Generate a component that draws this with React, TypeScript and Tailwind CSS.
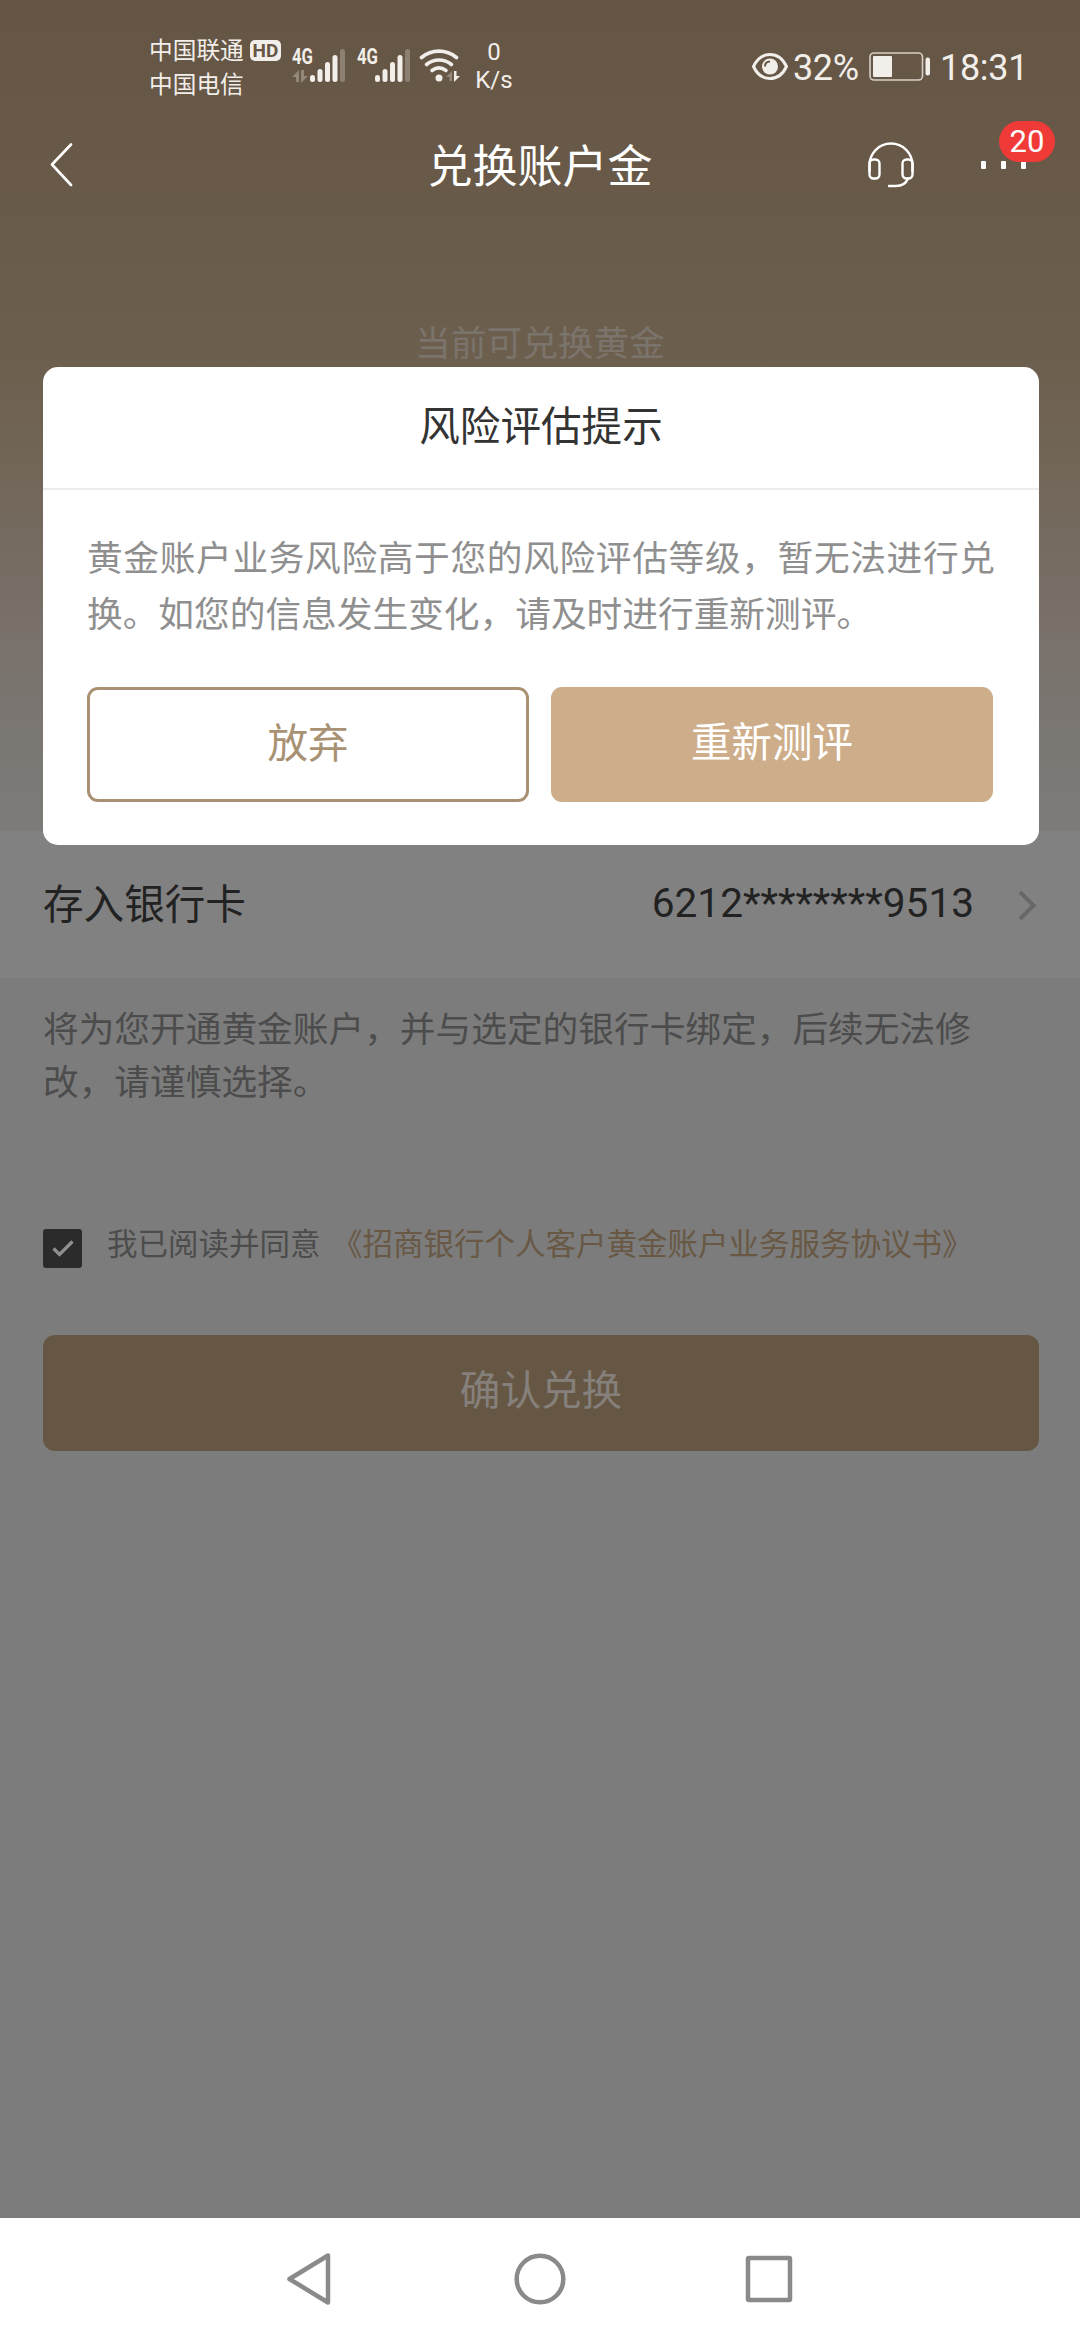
import type { ReactNode } from 'react';

const AGREEMENT = '《招商银行个人客户黄金账户业务服务协议书》';

function SignalBars() {
  return (
    <svg width="36" height="34" viewBox="0 0 36 34" fill="#f2eeea">
      <rect x="0" y="26" width="5" height="7" rx="2.5" />
      <rect x="7.5" y="20" width="5" height="13" rx="2.5" />
      <rect x="15" y="13" width="5" height="20" rx="2.5" />
      <rect x="22.5" y="6" width="5" height="27" rx="2.5" />
      <rect x="30" y="0" width="5" height="33" rx="2.5" opacity=".28" />
    </svg>
  );
}

function Signal({ arrows = false }: { arrows?: boolean }) {
  return (
    <div className="flex h-[34px] w-[54px]">
      <div className="flex w-[18px] shrink-0 flex-col justify-between">
        <span className="origin-left scale-x-[0.76] text-[22px] leading-[16px] font-bold">4G</span>
        {arrows && (
          <svg width="17" height="13" viewBox="0 0 17 13" fill="#f2eeea" opacity=".32">
            <path d="M7 0v12H4V7H0zM9 0h3v6h4l-7 7z" />
          </svg>
        )}
      </div>
      <SignalBars />
    </div>
  );
}

function StatusBar() {
  return (
    <div className="flex h-[120px] items-start text-[#f2eeea]">
      <div className="ml-[149px] mt-[34px] w-[96px] text-[23.7px] leading-[34px]">
        <div>中国联通</div>
        <div>中国电信</div>
      </div>
      <div className="ml-[5px] mt-[40px] flex h-[21px] w-[31px] items-center justify-center rounded-[5px] bg-[#f2eeea] text-[19px] leading-none font-bold text-[#665644]">
        HD
      </div>
      <div className="ml-[11px] mt-[49px]">
        <Signal arrows />
      </div>
      <div className="ml-[11px] mt-[49px]">
        <Signal />
      </div>
      <svg className="ml-[8px] mt-[48px]" width="42" height="35" viewBox="0 0 42 35" fill="none" stroke="#f2eeea" strokeWidth="3.6" strokeLinecap="round">
        <path d="M2.5 9.5C13 1 27 1 37.5 9.5" />
        <path d="M7.5 16.5c7.5-6 17.5-6 25 0" />
        <path d="M13 22.5c4.5-3.500 9.500-3.500 14 0" />
        <circle cx="20" cy="30" r="3.5" fill="#f2eeea" stroke="none" />
        <path d="M33 23v10h-2.500v-4H27z" fill="#f2eeea" opacity=".32" stroke="none" />
        <path d="M35 23h2.500v5H41l-6 6z" fill="#f2eeea" stroke="none" />
      </svg>
      <div className="ml-[12px] mt-[38px] w-[42px] text-center text-[24px] leading-[28px]">
        <div>0</div>
        <div>K/s</div>
      </div>

      <svg className="ml-[236px] mt-[52px]" width="38" height="29" viewBox="0 0 38 29" fill="none" stroke="#f2eeea" strokeWidth="3">
        <path d="M2.5 14.5C10 -1.5 28 -1.5 35.5 14.5C28 30.5 10 30.5 2.5 14.5Z" strokeLinejoin="round" />
        <circle cx="19" cy="14.5" r="8" fill="#f2eeea" stroke="none" />
        <path d="M14 14.5c0-3 2-5 5-5" stroke="#665644" strokeWidth="2" />
      </svg>
      <div className="ml-[4px] mt-[47px] w-[69px] text-[36px] leading-[42px] tracking-[-0.4px]">32%</div>
      <svg className="ml-[7px] mt-[52px]" width="62" height="29" viewBox="0 0 62 29" fill="#f2eeea">
        <rect x="1" y="1" width="52.5" height="27" rx="4" fill="none" stroke="#f2eeea" strokeOpacity=".8" strokeWidth="1.6" />
        <rect x="4" y="4" width="19" height="21" rx="1" />
        <rect x="56.5" y="5.5" width="4.5" height="18" rx="2.2" />
      </svg>
      <div className="ml-[9px] mt-[47px] text-[36px] leading-[42px] tracking-[-0.3px]">18:31</div>
    </div>
  );
}

function TitleBar() {
  return (
    <div className="flex h-[90px] items-center px-[48px] text-white">
      <div className="w-[200px]">
        <svg width="28" height="44" viewBox="0 0 28 44" fill="none" stroke="currentColor" strokeWidth="2.6" strokeLinecap="round" strokeLinejoin="round">
          <path d="M23 1.500L4 21.500l19 20.500" />
        </svg>
      </div>
      <h1 className="flex-1 pt-[5px] text-center text-[45px] leading-[60px]">兑换账户金</h1>
      <div className="flex w-[200px] items-center pl-[35px]">
        <svg className="shrink-0" width="48" height="48" viewBox="0 0 48 48" fill="none" stroke="currentColor" strokeWidth="2.4" strokeLinecap="round">
          <path d="M2.5 30V24a21.5 21.5 0 0 1 43 0v6" />
          <rect x="2.5" y="18.5" width="10" height="19" rx="4" />
          <rect x="35.5" y="18.5" width="10" height="19" rx="4" />
          <path d="M41 37.5c-2 5-7 7.5-12 7.5h-7" />
        </svg>
        <div className="relative ml-[66px] flex gap-[15px]">
          <i className="h-[8px] w-[5px] rounded-[1px] bg-white" />
          <i className="h-[8px] w-[5px] rounded-[1px] bg-white" />
          <i className="h-[8px] w-[5px] rounded-[1px] bg-white" />
          <span className="absolute -top-[40px] left-[18px] flex h-[41px] w-[56px] items-center justify-center rounded-full bg-[#f03a37] text-[31px] leading-none">
            20
          </span>
        </div>
      </div>
    </div>
  );
}

function DialogButton({ className, children }: { className: string; children: ReactNode }) {
  return <button className={`h-[115px] w-[442px] shrink-0 rounded-[11px] text-[40.5px] ${className}`}>{children}</button>;
}

function RiskDialog() {
  return (
    <div className="absolute top-[367px] left-[43px] h-[478px] w-[996px] rounded-[15px] bg-white">
      <h2 className="h-[123px] border-b-2 border-[#ececec] text-center text-[40.6px] leading-[121px] text-[#333]">
        风险评估提示
      </h2>
      <p className="px-[44px] pt-[41px] text-justify text-[35.7px] leading-[56px] text-[#8f8f8f]">
        黄金账户业务风险高于您的风险评估等级，暂无法进行兑换。如您的信息发生变化，请及时进行重新测评。
      </p>
      <div className="mt-[44px] flex gap-[22px] pl-[44px]">
        <DialogButton className="border-3 border-[#a99274] text-[#a99274]">放弃</DialogButton>
        <DialogButton className="bg-[#ceae8a] pb-[2px] text-white">重新测评</DialogButton>
      </div>
    </div>
  );
}

export default function App() {
  return (
    <div className="relative flex h-[2340px] w-[1080px] flex-col overflow-hidden bg-[#7c7c7c] font-['Roboto','Noto_Sans_CJK_SC',sans-serif]">
      <header className="h-[831px] bg-[linear-gradient(180deg,#655544_0px,#685948_180px,#6d5f4e_360px,#73685b_500px,#79716b_640px,#7b7975_770px,#7c7b77_831px)]">
        <StatusBar />
        <TitleBar />
        <p className="mt-[108px] text-center text-[35.7px] leading-[52px] text-[#7b746c]">当前可兑换黄金</p>
      </header>

      {/* 银行卡 */}
      <div className="flex h-[147px] items-center bg-[#818181] pr-[41px] pl-[43px] text-[40.6px] text-[#222]">
        <span className="flex-1 leading-[60px]">存入银行卡</span>
        <span className="mb-[4px] text-[40.6px] leading-[60px]">6212********9513</span>
        <svg className="ml-[43px]" width="22" height="32" viewBox="0 0 22 32" fill="none" stroke="#686868" strokeWidth="4">
          <path d="M3 3l13.500 13.500L3 30" />
        </svg>
      </div>

      <p className="mt-[26px] pl-[43px] text-[35.7px] leading-[53px] text-[#4c4c4c]">
        将为您开通黄金账户，并与选定的银行卡绑定，后续无法修
        <br />
        改，请谨慎选择。
      </p>

      {/* 协议 */}
      <div className="mt-[105px] ml-[43px] flex h-[60px] items-center text-[30.5px]">
        <div className="mt-[6px] flex size-[39px] items-center justify-center rounded-[3px] bg-[#2b2b2b]">
          <svg width="24" height="18" viewBox="0 0 24 18" fill="none" stroke="#909090" strokeWidth="3.2">
            <path d="M2.5 9.500l6 6L21.500 2.500" />
          </svg>
        </div>
        <span className="ml-[25px] w-[225px] text-[#4c4c4c]">我已阅读并同意</span>
        <span className="text-[#685844]">{AGREEMENT}</span>
      </div>

      <button className="mr-[41px] ml-[43px] mt-[60px] h-[116px] shrink-0 rounded-[12px] bg-[#665744] pb-[4px] text-[40.6px] text-[#85807b]">
        确认兑换
      </button>

      {/* 系统导航 */}
      <nav className="mt-auto flex h-[122px] items-center justify-center bg-white">
        <svg width="512" height="60" viewBox="284 0 512 60" fill="none" stroke="#8a8a8a" strokeWidth="4.5" strokeLinejoin="round">
          <path d="M289.5 30L328 6.500v47z" />
          <circle cx="540" cy="30" r="23.3" />
          <rect x="748" y="9" width="42" height="42" rx="1" />
        </svg>
      </nav>

      <RiskDialog />
    </div>
  );
}
